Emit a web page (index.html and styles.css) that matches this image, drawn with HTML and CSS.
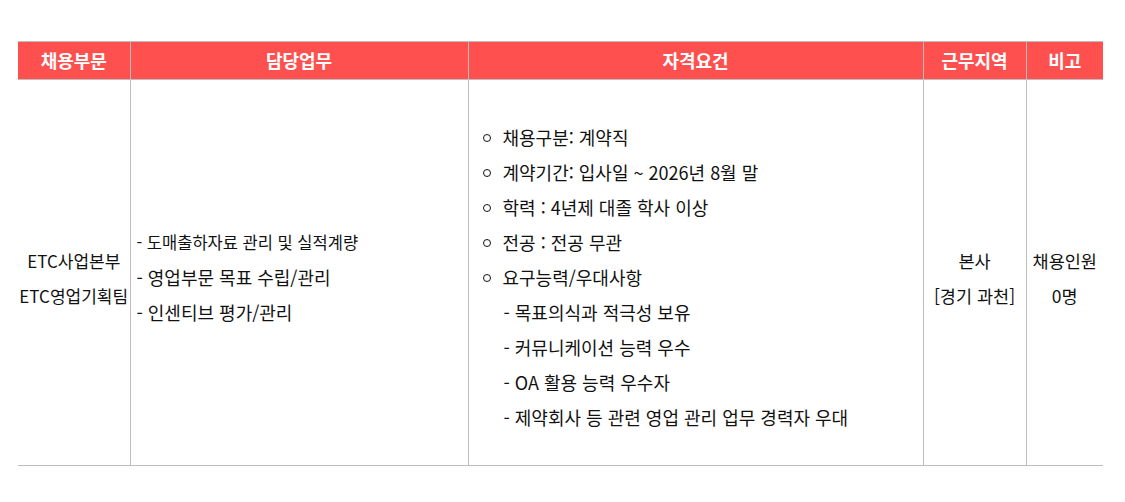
FILE: index.html
```html
<!DOCTYPE html>
<html lang="ko">
<head>
<meta charset="utf-8">
<link rel="stylesheet" href="styles.css">
</head>
<body>
<div class="wrap">
<table class="recruit">
  <colgroup>
    <col class="c1"><col class="c2"><col class="c3"><col class="c4"><col class="c5">
  </colgroup>
  <thead>
    <tr>
      <th>채용부문</th>
      <th>담당업무</th>
      <th>자격요건</th>
      <th>근무지역</th>
      <th>비고</th>
    </tr>
  </thead>
  <tbody>
    <tr>
      <td class="center dept">ETC사업본부<br>ETC영업기획팀</td>
      <td class="duty">
        <div class="small">- 도매출하자료 관리 및 실적계량</div>
        <div>- 영업부문 목표 수립/관리</div>
        <div>- 인센티브 평가/관리</div>
      </td>
      <td class="qual">
        <div class="item"><span class="dot"></span>채용구분: 계약직</div>
        <div class="item"><span class="dot"></span>계약기간: 입사일 ~ 2026년 8월 말</div>
        <div class="item"><span class="dot"></span>학력 : 4년제 대졸 학사 이상</div>
        <div class="item"><span class="dot"></span>전공 : 전공 무관</div>
        <div class="item"><span class="dot"></span>요구능력/우대사항</div>
        <div class="sub">- 목표의식과 적극성 보유</div>
        <div class="sub">- 커뮤니케이션 능력 우수</div>
        <div class="sub">- OA 활용 능력 우수자</div>
        <div class="sub">- 제약회사 등 관련 영업 관리 업무 경력자 우대</div>
      </td>
      <td class="center side">본사<br>[경기 과천]</td>
      <td class="center side">채용인원<br>0명</td>
    </tr>
  </tbody>
</table>
</div>
</body>
</html>
```

FILE: styles.css
```css
html, body {
  margin: 0;
  padding: 0;
  background: #ffffff;
}
body {
  font-family: "Malgun Gothic", "Noto Sans CJK KR", "Noto Sans", sans-serif;
  color: #111111;
}
.wrap {
  padding: 41px 22px 0 18px;
}
.recruit {
  width: 1085px;
  border-collapse: collapse;
  table-layout: fixed;
  font-size: 18px;
}
.c1 { width: 112px; }
.c2 { width: 338px; }
.c3 { width: 455px; }
.c4 { width: 103px; }
.c5 { width: 77px; }
.recruit th {
  background: #ff5050;
  color: #ffffff;
  font-weight: bold;
  font-size: 18px;
  height: 37px;
  padding: 0;
  border-top: 1px solid #bdbdbd;
  border-left: 1px solid #bdbdbd;
  border-right: 1px solid #bdbdbd;
  line-height: 37px;
}
.recruit th:first-child { border-left: none; }
.recruit th:last-child { border-right: none; }
.recruit td {
  vertical-align: middle;
  padding: 40px 0 30px;
  line-height: 35px;
  border: 1px solid #bdbdbd;
}
.recruit td:first-child { border-left: none; }
.recruit td:last-child { border-right: none; }
.center { text-align: center; }
.dept { font-size: 17px; }
.side { font-size: 17.5px; }
.duty { padding-left: 6px !important; }
.duty .small { font-size: 16.5px; }
.qual { padding-left: 14px !important; }
.item {
  display: flex;
  align-items: center;
}
.dot {
  display: inline-block;
  width: 6px;
  height: 6px;
  border: 1.5px solid #111111;
  border-radius: 50%;
  margin-right: 12px;
}
.sub {
  padding-left: 21px;
}
```
